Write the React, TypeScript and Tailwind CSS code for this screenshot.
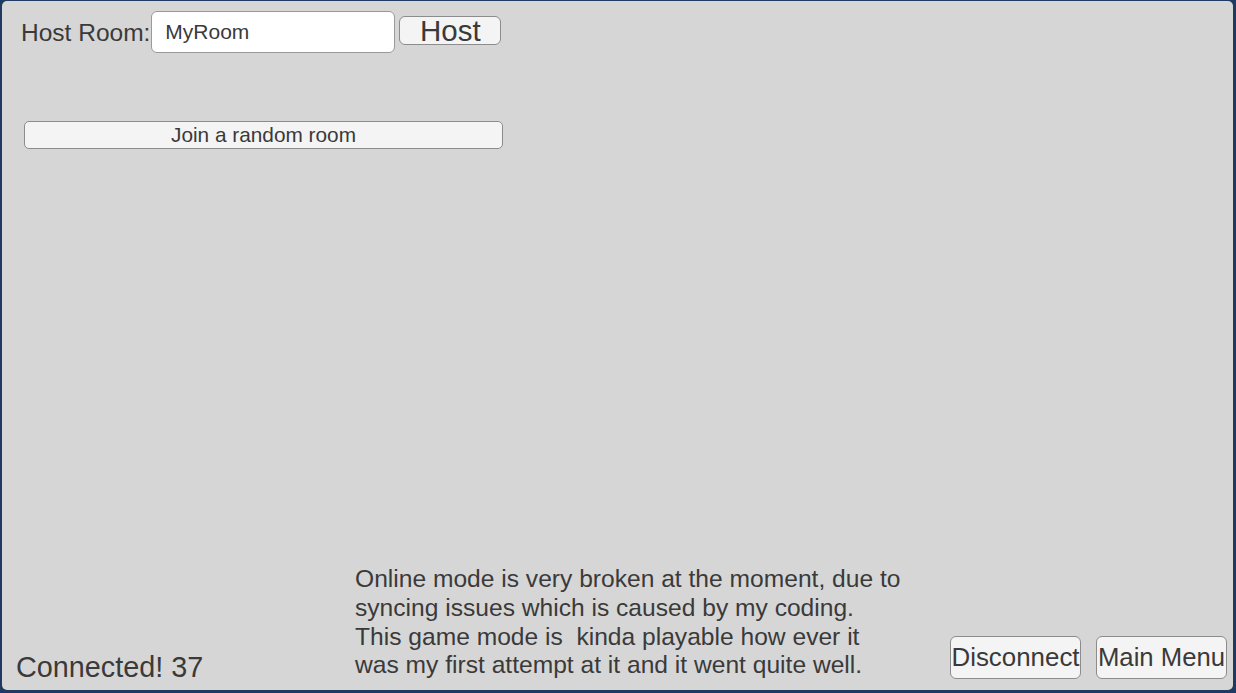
export default function App() {
  const font = { fontFamily: '"Liberation Sans", Arial, sans-serif' };

  return (
    <div className="w-[1236px] h-[693px] bg-[#1f3a62] pl-[2px] pr-[3px] pt-[1px] pb-[3px]" style={font}>
      <div className="w-full h-full bg-[#d6d6d6] rounded-[5px] flex flex-col text-[#3a3a3a]">
        {/* host row */}
        <div className="flex items-start pl-[19px] pt-[10px]">
          <span className="text-[24.5px] leading-[28px] mt-[8px]">Host Room:</span>
          <div className="ml-[1px] w-[244px] h-[42px] bg-white border border-[#9a9a9a] rounded-[6px] flex items-center pl-[13px] text-[21px]">
            MyRoom
          </div>
          <button className="ml-[4px] mt-[5px] w-[102px] h-[29px] bg-[#f4f4f4] border border-[#8c8c8c] rounded-[6px] flex items-center justify-center text-[29.5px] leading-none">
            Host
          </button>
        </div>

        <button className="ml-[22px] mt-[68px] w-[479px] h-[28px] bg-[#f4f4f4] border border-[#8c8c8c] rounded-[5px] flex items-center justify-center text-[20.8px] leading-none">
          Join a random room
        </button>

        <div className="flex-1" />

        {/* bottom row */}
        <div className="flex items-end pl-[14px] pr-[6px] pb-[10px]">
          <div className="w-[339px] text-[28.8px] leading-[33px] mb-[-4px]">Connected! 37</div>
          <p className="text-[24.6px] leading-[28.7px]">
            Online mode is very broken at the moment, due to
            <br />
            syncing issues which is caused by my coding.
            <br />
            This game mode is&nbsp; kinda playable how ever it
            <br />
            was my first attempt at it and it went quite well.
          </p>
          <div className="ml-auto flex gap-[15px] mb-[1px]">
            <button className="w-[131px] h-[43px] bg-[#f4f4f4] border border-[#8c8c8c] rounded-[6px] flex items-center justify-center text-[25.9px] leading-none whitespace-nowrap">
              Disconnect
            </button>
            <button className="w-[131px] h-[43px] bg-[#f4f4f4] border border-[#8c8c8c] rounded-[6px] flex items-center justify-center text-[25.7px] leading-none whitespace-nowrap">
              Main Menu
            </button>
          </div>
        </div>
      </div>
    </div>
  );
}
